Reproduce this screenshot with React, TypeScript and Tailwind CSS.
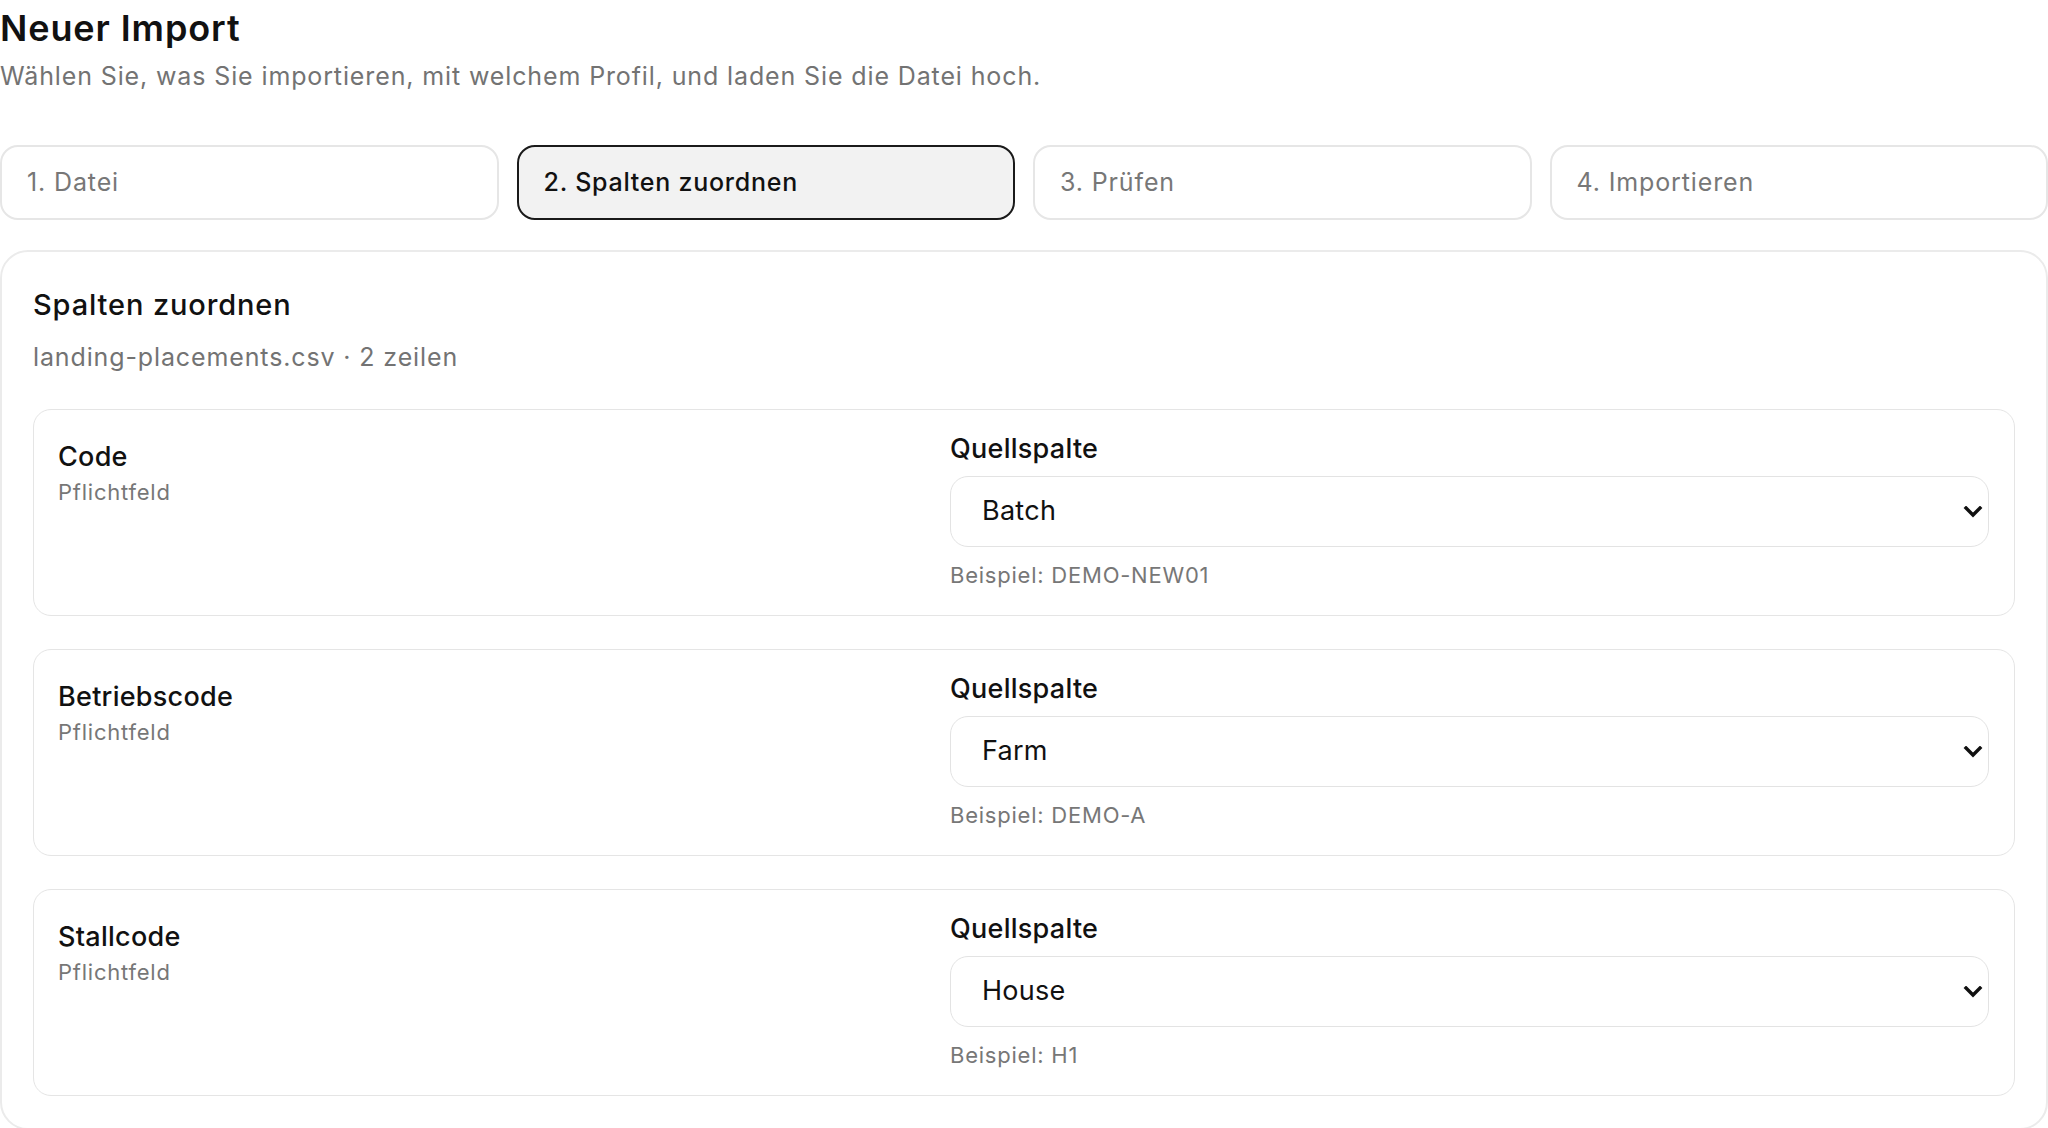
import React from 'react';

type Step = { id: number; label: string };

const steps: Step[] = [
  { id: 1, label: '1. Datei' },
  { id: 2, label: '2. Spalten zuordnen' },
  { id: 3, label: '3. Prüfen' },
  { id: 4, label: '4. Importieren' },
];

type Mapping = { field: string; source: string; example: string; options: string[] };

const mappings: Mapping[] = [
  { field: 'Code', source: 'Batch', example: 'DEMO-NEW01', options: ['Batch', 'Farm', 'House'] },
  { field: 'Betriebscode', source: 'Farm', example: 'DEMO-A', options: ['Batch', 'Farm', 'House'] },
  { field: 'Stallcode', source: 'House', example: 'H1', options: ['Batch', 'Farm', 'House'] },
];

const Chevron = () => (
  <svg
    width="20"
    height="12"
    viewBox="0 0 20 12"
    className="pointer-events-none absolute right-[6px] top-1/2 -translate-y-1/2"
    aria-hidden="true"
  >
    <polyline points="3,2 10,9 17,2" fill="none" stroke="#111" strokeWidth="3.4" strokeLinecap="square" />
  </svg>
);

const MappingRow: React.FC<{ m: Mapping }> = ({ m }) => (
  <div className="grid grid-cols-[minmax(0,1fr)_1039px] rounded-[18px] border border-[#e5e5e5] bg-white pl-[24px] pr-[25px] pt-[21px] pb-[25px]">
    <div className="pt-[8px]">
      <div className="text-[27px] leading-[36px] font-medium tracking-[0.01em] text-[#111]">{m.field}</div>
      <div className="mt-[2px] text-[22px] leading-[30px] tracking-[0.035em] text-[#777]">Pflichtfeld</div>
    </div>
    <div>
      <label className="block text-[27px] leading-[36px] font-medium tracking-[0.01em] text-[#111]">Quellspalte</label>
      <div className="relative mt-[9px]">
        <select
          defaultValue={m.source}
          className="block h-[71px] w-full appearance-none rounded-[18px] border border-[#e3e3e3] bg-white pl-[31px] text-[27px] tracking-[0.01em] text-[#111] outline-none"
        >
          {m.options.map((o) => (
            <option key={o} value={o}>{o}</option>
          ))}
        </select>
        <Chevron />
      </div>
      <div className="mt-[13px] text-[22px] leading-[30px] tracking-[0.035em] text-[#777]">Beispiel: {m.example}</div>
    </div>
  </div>
);

export default function App() {
  const current = 2;

  return (
    <div className="min-h-screen bg-white font-['Inter',sans-serif] text-[#111]">
      <header className="pt-[7px]">
        <h1 className="text-[36px] leading-[43px] font-semibold tracking-[0.025em]">Neuer Import</h1>
        <p className="mt-[9px] text-[25px] leading-[34px] tracking-[0.035em] text-[#737373]">
          Wählen Sie, was Sie importieren, mit welchem Profil, und laden Sie die Datei hoch.
        </p>
      </header>

      <div className="mt-[52px] grid grid-cols-4 gap-[18px]">
        {steps.map((s) => (
          <div
            key={s.id}
            className={
              s.id === current
                ? 'flex h-[75px] items-center rounded-[18px] border-2 border-[#1a1a1a] bg-[#f2f2f2] px-[25px] text-[25px] font-medium tracking-[0.03em] text-[#111]'
                : 'flex h-[75px] items-center rounded-[18px] border-2 border-[#e6e6e6] bg-white px-[25px] text-[25px] tracking-[0.035em] text-[#777]'
            }
          >
            {s.label}
          </div>
        ))}
      </div>

      <section className="mt-[30px] rounded-[28px] border-2 border-[#ebebeb] px-[31px] pt-[34px] pb-[32px]">
        <h2 className="text-[29px] leading-[38px] font-medium tracking-[0.03em]">Spalten zuordnen</h2>
        <p className="mt-[16px] text-[25px] leading-[34px] tracking-[0.035em] text-[#737373]">landing-placements.csv · 2 zeilen</p>
        <div className="mt-[35px] flex flex-col gap-[33px]">
          {mappings.map((m) => (
            <MappingRow key={m.field} m={m} />
          ))}
        </div>
      </section>
    </div>
  );
}
